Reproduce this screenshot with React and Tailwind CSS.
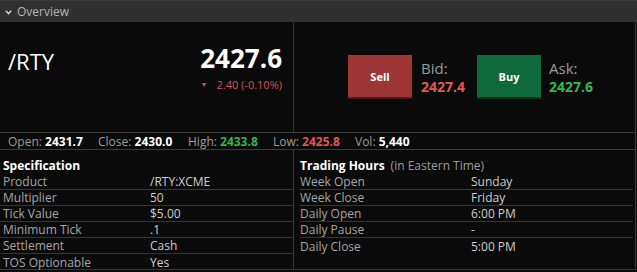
const SPEC = [
  ['Product', '/RTY:XCME'],
  ['Multiplier', '50'],
  ['Tick Value', '$5.00'],
  ['Minimum Tick', '.1'],
  ['Settlement', 'Cash'],
  ['TOS Optionable', 'Yes'],
];

const HOURS = [
  ['Week Open', 'Sunday'],
  ['Week Close', 'Friday'],
  ['Daily Open', '6:00 PM'],
  ['Daily Pause', '-'],
  ['Daily Close', '5:00 PM'],
];

const STATS = [
  { label: 'Open:', value: '2431.7', color: 'text-white', w: 'w-[90px]' },
  { label: 'Close:', value: '2430.0', color: 'text-white', w: 'w-[90px]' },
  { label: 'High:', value: '2433.8', color: 'text-[#35b54a]', w: 'w-[85px]' },
  { label: 'Low:', value: '2425.8', color: 'text-[#e05555]', w: 'w-[82px]' },
  { label: 'Vol:', value: '5,440', color: 'text-white', w: 'w-auto' },
];

function Row({ label, value, line = true, valueX = 'w-[147px]' }) {
  return (
    <div className={`flex h-[16px] items-center ${line ? 'border-b border-[#353535]' : ''}`}>
      <span className={`${valueX} shrink-0 text-[#a6a6a6]`}>{label}</span>
      <span className="text-[#cdcdcd]">{value}</span>
    </div>
  );
}

export default function App() {
  return (
    <div className="w-[637px] h-[272px] bg-[#0a0a0a] overflow-hidden font-['Open_Sans',sans-serif] text-[12px] leading-[15px]">
      {/* Header */}
      <div className="h-[22px] bg-[#303030] border-t border-[#3a3a3a] flex items-center pl-[5px] gap-[5px]">
        <svg width="7" height="5" viewBox="0 0 7 5" className="mt-[1px]">
          <path d="M0.8 0.8 L3.5 3.6 L6.2 0.8" stroke="#d0d0d0" strokeWidth="1.5" fill="none" />
        </svg>
        <span className="text-[#b4b4b4] text-[12px]">Overview</span>
      </div>

      <div className="w-[636px] border-r border-[#3c3c3c]">
        {/* Quote */}
        <div className="h-[110px] flex">
          <div className="w-[294px] border-r border-[#333] flex justify-between pl-[8px] pr-[11px]">
            <div className="pt-[28px] text-[22px] leading-[22px] text-white">/RTY</div>
            <div className="pt-[23px] flex flex-col items-end">
              <div className="text-[26px] leading-[26px] font-bold text-white">2427.6</div>
              <div className="mt-[6px] flex items-center text-[11px] leading-[16px] text-[#d25454]">
                <span className="text-[7px] mr-[9px]">▼</span>
                <span>2.40 (-0.10%)</span>
              </div>
            </div>
          </div>
          <div className="flex-1 flex items-center pl-[54px]">
            <div className="w-[64px] h-[44px] bg-[#9d3535] border-b-2 border-[#4e1a1a] flex items-center justify-center text-white font-bold text-[11px]">
              Sell
            </div>
            <div className="ml-[9px] w-[56px] flex flex-col">
              <span className="text-[15px] leading-[19px] text-[#9a9a9a]">Bid:</span>
              <span className="text-[14px] leading-[18px] font-bold text-[#e05a5a]">2427.4</span>
            </div>
            <div className="w-[64px] h-[44px] bg-[#0e6a3b] border-b-2 border-[#083520] flex items-center justify-center text-white font-bold text-[11px]">
              Buy
            </div>
            <div className="ml-[8px] flex flex-col">
              <span className="text-[15px] leading-[19px] text-[#9a9a9a]">Ask:</span>
              <span className="text-[14px] leading-[18px] font-bold text-[#30bb4c]">2427.6</span>
            </div>
          </div>
        </div>

        {/* Stats */}
        <div className="h-[18px] border-y border-[#3a3a3a] flex items-center pl-[8px]">
          {STATS.map((s) => (
            <div key={s.label} className={`${s.w} shrink-0`}>
              <span className="text-[#9c9c9c]">{s.label} </span>
              <span className={`font-bold ${s.color}`}>{s.value}</span>
            </div>
          ))}
        </div>

        {/* Details */}
        <div className="h-[120px] flex border-b border-[#353535]">
          <div className="w-[294px] border-r border-[#353535]">
            <div className="h-[24px] pt-[8px] pl-[3px] font-bold text-white">Specification</div>
            {SPEC.map(([l, v], i) => (
              <div key={l} className={`flex h-[16px] items-center pl-[3px] ${i < SPEC.length - 1 ? 'border-b border-[#353535]' : ''}`}>
                <span className="w-[147px] shrink-0 text-[#a6a6a6]">{l}</span>
                <span className="text-[#cdcdcd]">{v}</span>
              </div>
            ))}
          </div>
          <div className="flex-1 pr-[2px]">
            <div className="h-[24px] pt-[8px] pl-[6px]">
              <span className="font-bold text-white">Trading Hours</span>
              <span className="text-[#9a9a9a] ml-[6px]">(in Eastern Time)</span>
            </div>
            <div className="pl-[6px]">
              {HOURS.map(([l, v], i) => (
                <Row key={l} label={l} value={v} line={i < HOURS.length - 1} valueX="w-[171px]" />
              ))}
            </div>
          </div>
        </div>
      </div>
    </div>
  );
}
